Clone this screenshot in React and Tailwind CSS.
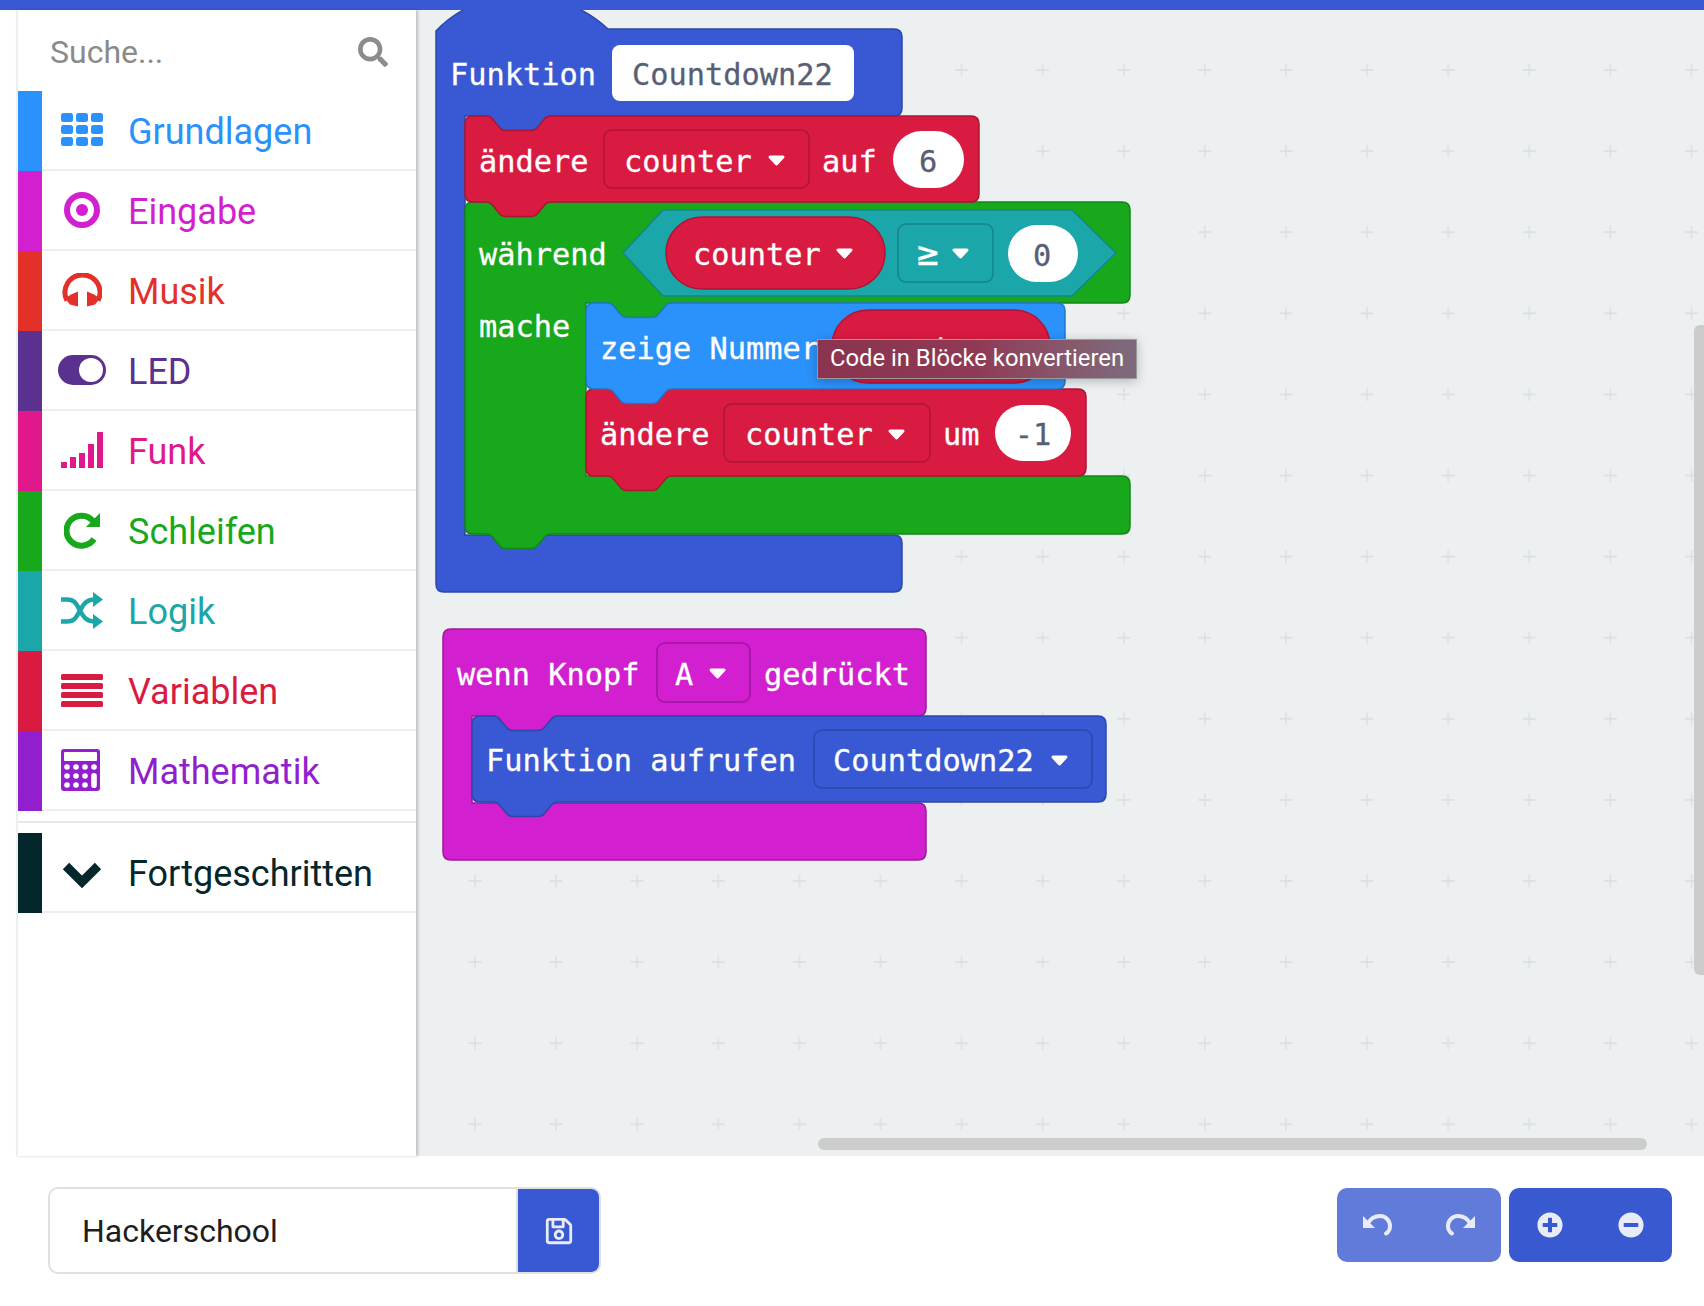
import React from 'react';
import { FaSearch, FaRegSave, FaPlusCircle, FaMinusCircle } from 'react-icons/fa';

const BLUE = '#3859d3';

const GridIcon = () => (
  <svg width="42" height="33" viewBox="0 0 42 33" fill="#2b92fb" className="mb-[2px]">
    {[0, 12, 24].map((y) =>
      [0, 15, 30].map((x) => <rect key={`${x}-${y}`} x={x} y={y} width="12" height="9" rx="2.5" />)
    )}
  </svg>
);

const TargetIcon = () => (
  <svg width="36" height="36" viewBox="0 0 36 36">
    <circle cx="18" cy="18" r="15" fill="none" stroke="#d21fd0" strokeWidth="6" />
    <circle cx="18" cy="18" r="6" fill="#d21fd0" />
  </svg>
);

const HeadphonesIcon = () => (
  <svg width="40" height="34" viewBox="61 271.5 40 34" fill="#e3312a">
    <path d="M66 299 A17.5 17.5 0 1 1 97 299" fill="none" stroke="#e3312a" strokeWidth="5" />
    <path d="M77 290 L77 305 L69 303 L64 297 L70 293 Z" />
    <path d="M86 290 L86 305 L94 303 L99 297 L93 293 Z" />
  </svg>
);

const ToggleIcon = () => (
  <div className="flex h-[30px] w-12 items-center justify-end rounded-full bg-[#5b318f] pr-[3px]">
    <div className="h-6 w-6 rounded-full bg-white" />
  </div>
);

const SignalIcon = () => (
  <svg width="42" height="36" viewBox="0 0 42 36" fill="#e0188c">
    <rect x="0" y="30" width="6" height="6" />
    <rect x="9" y="25" width="6" height="11" />
    <rect x="18" y="21" width="6" height="15" />
    <rect x="27" y="12" width="6" height="24" />
    <rect x="36" y="0" width="6" height="36" />
  </svg>
);

const LoopIcon = () => (
  <svg width="36" height="38" viewBox="0 0 36 38">
    <path d="M29 10 A15 15 0 1 0 30 28" fill="none" stroke="#18a81c" strokeWidth="6" />
    <path d="M36 2 L36 16 L22 16 Z" fill="#18a81c" />
  </svg>
);

const ShuffleIcon = () => (
  <svg width="42" height="37" viewBox="0 0 42 37" fill="#1ba6a9">
    <path
      d="M0 7.5 H6 C13 7.5 15 11 19 18.5 C23 26 26 29.5 34 29.5 M0 29.5 H6 C13 29.5 15 26 19 18.5 C23 11 26 7.5 34 7.5"
      fill="none"
      stroke="#1ba6a9"
      strokeWidth="4.5"
    />
    <path d="M32 0 L42 7.5 L32 15 Z" />
    <path d="M32 22 L42 29.5 L32 37 Z" />
  </svg>
);

const BarsIcon = () => (
  <svg width="42" height="33" viewBox="0 0 42 33" fill="#da1b41">
    {[0, 9, 18, 27].map((y) => (
      <rect key={y} y={y} width="42" height="6" rx="1.5" />
    ))}
  </svg>
);

const CalcIcon = () => (
  <svg width="39" height="42" viewBox="0 0 39 42" className="mr-[3px]">
    <rect width="39" height="42" rx="3" fill="#911fcd" />
    <rect x="3" y="3" width="33" height="9" rx="1" fill="#fff" />
    {[18, 27, 36].map((y) =>
      [6, 15, 24, 33].map((x) =>
        x === 33 && y > 18 ? null : <circle key={`${x}-${y}`} cx={x} cy={y} r="2.8" fill="#fff" />
      )
    )}
    <rect x="30.2" y="24" width="5.6" height="15" rx="2.8" fill="#fff" />
  </svg>
);

const ChevronIcon = () => (
  <svg width="40" height="28" viewBox="0 0 40 28" className="mt-[5px]">
    <path d="M4 5 L20 21 L36 5" fill="none" stroke="#03272b" strokeWidth="9" />
  </svg>
);

// undo arrow, redo is the same drawing flipped
const UndoIcon = ({ className }) => (
  <svg width="30" height="24" viewBox="0 0 30 24" className={className}>
    <path d="M0 3 L0 15 L12 15 Z" fill="currentColor" />
    <path
      d="M5 10 C8 5 13 3 17 3 C23 3 27 8 27 13 C27 16 25.5 19 23 20.5"
      fill="none"
      stroke="currentColor"
      strokeWidth="4"
      strokeLinecap="round"
    />
  </svg>
);

const CATEGORIES = [
  { name: 'Grundlagen', bar: 'bg-[#2b92fb]', text: 'text-[#2b92fb]', icon: <GridIcon /> },
  { name: 'Eingabe', bar: 'bg-[#d21fd0]', text: 'text-[#d21fd0]', icon: <TargetIcon /> },
  { name: 'Musik', bar: 'bg-[#e3312a]', text: 'text-[#e3312a]', icon: <HeadphonesIcon /> },
  { name: 'LED', bar: 'bg-[#5b318f]', text: 'text-[#5b318f]', icon: <ToggleIcon /> },
  { name: 'Funk', bar: 'bg-[#e0188c]', text: 'text-[#e0188c]', icon: <SignalIcon /> },
  { name: 'Schleifen', bar: 'bg-[#18a81c]', text: 'text-[#18a81c]', icon: <LoopIcon /> },
  { name: 'Logik', bar: 'bg-[#1ba6a9]', text: 'text-[#1ba6a9]', icon: <ShuffleIcon /> },
  { name: 'Variablen', bar: 'bg-[#da1b41]', text: 'text-[#da1b41]', icon: <BarsIcon /> },
  { name: 'Mathematik', bar: 'bg-[#911fcd]', text: 'text-[#911fcd]', icon: <CalcIcon /> },
];

const CategoryRow = ({ name, bar, text, icon }) => (
  <div className="flex h-20">
    <div className={`w-6 ${bar}`} />
    <div className="flex flex-1 items-center border-b-2 border-[#ecf0f1]">
      <div className="flex w-20 items-center justify-center">{icon}</div>
      <span className={`ml-[6px] mt-[3px] text-[36px] ${text}`}>{name}</span>
    </div>
  </div>
);

const Sidebar = () => (
  <div className="relative z-10 flex w-[400px] flex-col border-l-2 border-[#ecf0f1] bg-white font-[Roboto] shadow-[2px_0_3px_rgba(0,0,0,0.2)]">
    <div className="flex h-[81px] items-center justify-between pl-[32px] pr-[28px]">
      <span className="mt-[3px] text-[32px] text-[#8a8a8a]">Suche...</span>
      <FaSearch size={30} color="#8c8c8c" className="mt-[2px]" />
    </div>
    {CATEGORIES.map((c) => (
      <CategoryRow key={c.name} {...c} />
    ))}
    <div className="mb-[10px] mt-[10px] h-[2px] bg-[#e6e9ea]" />
    <CategoryRow name="Fortgeschritten" bar="bg-[#03272b]" text="text-[#03272b]" icon={<ChevronIcon />} />
  </div>
);

// block outlines, all in page coordinates
const notch = (x, y) =>
  `L${x + 21} ${y} Q${x + 25} ${y} ${x + 27} ${y + 2.5} L${x + 35} ${y + 12} Q${x + 37} ${y + 14.5} ${x + 41} ${y + 14.5} ` +
  `L${x + 66} ${y + 14.5} Q${x + 70} ${y + 14.5} ${x + 72} ${y + 12} L${x + 80} ${y + 2.5} Q${x + 82} ${y} ${x + 86} ${y} `;

const tab = (x, y) =>
  `L${x + 86} ${y} Q${x + 82} ${y} ${x + 80} ${y + 2.5} L${x + 72} ${y + 12} Q${x + 70} ${y + 14.5} ${x + 66} ${y + 14.5} ` +
  `L${x + 41} ${y + 14.5} Q${x + 37} ${y + 14.5} ${x + 35} ${y + 12} L${x + 27} ${y + 2.5} Q${x + 25} ${y} ${x + 21} ${y} `;

const stack = (x, y, r, b) =>
  `M${x} ${y + 8} Q${x} ${y} ${x + 8} ${y} ${notch(x, y)}L${r - 8} ${y} Q${r} ${y} ${r} ${y + 8} ` +
  `L${r} ${b - 8} Q${r} ${b} ${r - 8} ${b} ${tab(x, b)}L${x + 8} ${b} Q${x} ${b} ${x} ${b - 8} Z`;

const mouth = (r, armBottom, inner, armTop, r2, b) =>
  `L${r} ${armBottom - 8} Q${r} ${armBottom} ${r - 8} ${armBottom} ${tab(inner, armBottom)}L${inner} ${armBottom} ` +
  `L${inner} ${armTop} L${r2 - 8} ${armTop} Q${r2} ${armTop} ${r2} ${armTop + 8} L${r2} ${b - 8} Q${r2} ${b} ${r2 - 8} ${b} `;

const T = ({ x, y, fill = '#fff', anchor, size = 30.3, children }) => (
  <text x={x} y={y} fill={fill} stroke={fill} strokeWidth="0.3" textAnchor={anchor} fontSize={size}>
    {children}
  </text>
);

const Caret = ({ x, y }) => (
  <path d={`M${x + 3} ${y + 2} L${x + 16} ${y + 2} L${x + 9.5} ${y + 9} Z`} fill="#fff" stroke="#fff" strokeWidth="3" strokeLinejoin="round" />
);

const Field = ({ x, y, r, b, stroke }) => (
  <rect x={x} y={y} width={r - x} height={b - y} rx="8" fill="none" stroke={stroke} strokeWidth="1.5" />
);

const Pill = ({ x, y, r, b, children, cx }) => (
  <>
    <rect x={x} y={y} width={r - x} height={b - y} rx={(b - y) / 2} fill="#fff" />
    <T x={cx} y={b - 16} fill="#575e75" anchor="middle">
      {children}
    </T>
  </>
);

const RED = '#da1b41';
const RED_D = '#ae1534';

const Blocks = () => (
  <svg
    className="absolute inset-0 h-full w-full font-['DejaVu_Sans_Mono',monospace]"
    viewBox="416 10 1288 1146"
  >
    <defs>
      <pattern id="grid" x="434.45" y="29.45" width="81.1" height="81.1" patternUnits="userSpaceOnUse">
        <path d="M34 40.55 H47 M40.55 34 V47" stroke="#d9dde0" strokeWidth="1.3" />
      </pattern>
    </defs>
    <rect x="416" y="10" width="1288" height="1146" fill="url(#grid)" />

    {/* function definition */}
    <path
      d={`M436 31 C480 -16 560 -16 608 29 L894 29 Q902 29 902 37 ${mouth(902, 116, 465, 535, 902, 592)}L444 592 Q436 592 436 584 Z`}
      fill={BLUE}
      stroke="#2d47a8"
      strokeWidth="1.5"
    />
    <T x={450} y={85}>Funktion</T>
    <rect x="612" y="45" width="242" height="56" rx="8" fill="#fff" />
    <T x={632} y={85} fill="#575e75">Countdown22</T>

    {/* while loop */}
    <path
      d={`M465 210 Q465 202 473 202 ${notch(465, 202)}L1122 202 Q1130 202 1130 210 ${mouth(1130, 303, 586, 476, 1130, 534)}${tab(465, 534)}L473 534 Q465 534 465 526 Z`}
      fill="#18a81c"
      stroke="#128616"
      strokeWidth="1.5"
    />
    <T x={479} y={265}>während</T>
    <T x={479} y={337}>mache</T>
    <path d="M623 253 L663 210 L1072 210 L1116 253 L1072 296 L663 296 Z" fill="#1ba6a9" stroke="#158587" strokeWidth="1.5" />
    <rect x="666" y="217" width="219" height="72" rx="36" fill={RED} stroke={RED_D} strokeWidth="1.5" />
    <T x={693} y={265}>counter</T>
    <Caret x={835} y={248} />
    <Field x={898} y={224} r={993} b={282} stroke="#158587" />
    <T x={917} y={265} size={36}>≥</T>
    <Caret x={951} y={248} />
    <Pill x={1008} y={225} r={1078} b={282} cx={1042}>0</Pill>

    {/* set counter */}
    <path d={stack(465, 116, 979, 202)} fill={RED} stroke={RED_D} strokeWidth="1.5" />
    <T x={479} y={172}>ändere</T>
    <Field x={604} y={130} r={809} b={188} stroke={RED_D} />
    <T x={624} y={172}>counter</T>
    <Caret x={767} y={155} />
    <T x={822} y={172}>auf</T>
    <Pill x={893} y={131} r={964} b={188} cx={928}>6</Pill>

    {/* change counter */}
    <path d={stack(586, 389, 1086, 476)} fill={RED} stroke={RED_D} strokeWidth="1.5" />
    <T x={600} y={445}>ändere</T>
    <Field x={724} y={404} r={930} b={462} stroke={RED_D} />
    <T x={745} y={445}>counter</T>
    <Caret x={887} y={429} />
    <T x={943} y={445}>um</T>
    <Pill x={995} y={405} r={1071} b={461} cx={1033}>-1</Pill>

    {/* show number */}
    <path d={stack(586, 303, 1065, 389)} fill="#2b92fb" stroke="#2277cc" strokeWidth="1.5" />
    <T x={600} y={359}>zeige Nummer</T>
    <rect x="832" y="310" width="218" height="73" rx="36" fill={RED} stroke={RED_D} strokeWidth="1.5" />
    <T x={860} y={359}>counter</T>

    {/* button handler */}
    <path
      d={`M443 637 Q443 629 451 629 L918 629 Q926 629 926 637 ${mouth(926, 716, 472, 803, 926, 860)}L451 860 Q443 860 443 852 Z`}
      fill="#d21fd0"
      stroke="#a0169f"
      strokeWidth="1.5"
    />
    <T x={457} y={685}>wenn Knopf</T>
    <Field x={657} y={643} r={750} b={702} stroke="#a0169f" />
    <T x={675} y={685}>A</T>
    <Caret x={708} y={668} />
    <T x={764} y={685}>gedrückt</T>

    <path d={stack(472, 716, 1106, 802)} fill={BLUE} stroke="#2d47a8" strokeWidth="1.5" />
    <T x={486} y={771}>Funktion aufrufen</T>
    <Field x={814} y={730} r={1092} b={788} stroke="#2d47a8" />
    <T x={833} y={771}>Countdown22</T>
    <Caret x={1050} y={755} />
  </svg>
);

const Canvas = () => (
  <div className="relative flex-1 overflow-hidden bg-[#ecf0f1]">
    <Blocks />
    <div className="absolute left-[401px] top-[329px] flex h-10 w-[320px] items-center border border-[#9a9aa0] bg-linear-to-r from-[#8a3450] via-[#8f3a55] to-[#7c6b7d] pl-[12px] font-[Roboto] text-[23.8px] text-white shadow-[0_2px_10px_rgba(0,0,0,0.25)]">
      Code in Blöcke konvertieren
    </div>
    <div className="absolute left-[402px] top-[1128px] h-3 w-[829px] rounded-full bg-[#cccccc]" />
    <div className="absolute right-0 top-[315px] h-[650px] w-[10px] rounded-l-md bg-[#cccccc]" />
  </div>
);

const ToolGroup = ({ className, children }) => (
  <div className={`flex h-[74px] items-center justify-around rounded-[10px] text-[#e8ecf9] ${className}`}>
    {children}
  </div>
);

export default function App() {
  return (
    <div className="flex h-[1306px] w-[1704px] flex-col overflow-hidden bg-white font-[Roboto]">
      <div className="h-[10px] bg-[#3859d3]" />
      <div className="flex h-[1146px]">
        <div className="w-4 bg-white" />
        <Sidebar />
        <Canvas />
      </div>
      <div className="flex flex-1 items-start justify-between pl-[48px] pr-[32px] pt-[31px]">
        <div className="flex h-[87px] w-[553px] overflow-hidden rounded-[10px] border-2 border-[#e0e0e0]">
          <div className="flex flex-1 items-center pl-[32px] text-[32px] text-[#1e1e1e]">Hackerschool</div>
          <div className="flex w-[83px] items-center justify-center border-l-2 border-[#e0e0e0] bg-[#3859d3]">
            <FaRegSave size={30} color="#e8ecf9" />
          </div>
        </div>
        <div className="mt-[1px] flex gap-2">
          <ToolGroup className="w-[164px] bg-[#607bda]">
            <UndoIcon />
            <UndoIcon className="-scale-x-100" />
          </ToolGroup>
          <ToolGroup className="w-[163px] bg-[#3859d0]">
            <FaPlusCircle size={26} />
            <FaMinusCircle size={26} />
          </ToolGroup>
        </div>
      </div>
    </div>
  );
}
